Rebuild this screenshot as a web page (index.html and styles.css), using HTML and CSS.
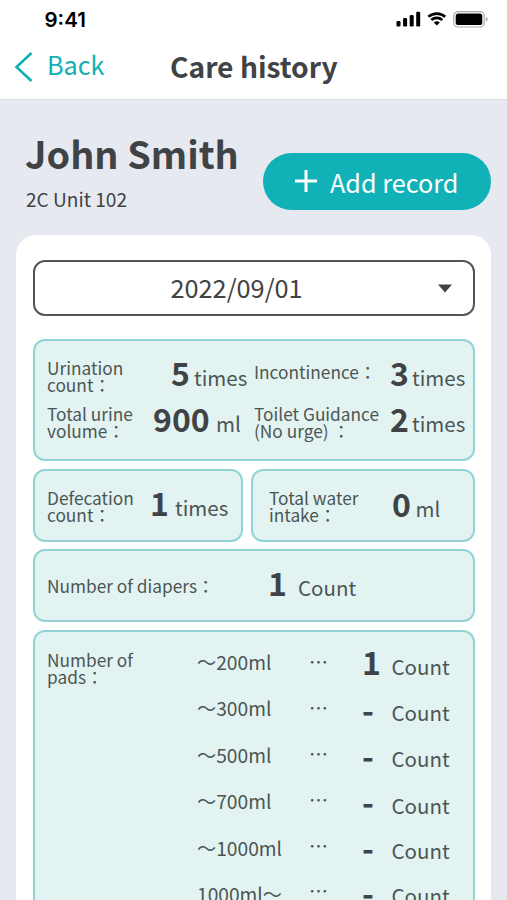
FILE: index.html
```html
<!DOCTYPE html>
<html lang="en">
<head>
<meta charset="utf-8">
<title>Care history</title>
<link rel="stylesheet" href="styles.css">
</head>
<body>
<header class="top">
  <div class="status">
    <span class="clock">9:41</span>
    <svg class="status-icons" width="94" height="20" viewBox="0 0 94 20">
      <rect x="1.5" y="11" width="4" height="5.4" rx="1.2"/>
      <rect x="8.1" y="8" width="4" height="8.4" rx="1.2"/>
      <rect x="14.7" y="5" width="4" height="11.4" rx="1.2"/>
      <rect x="21.2" y="1.8" width="4" height="14.6" rx="1.2"/>
      <path d="M41.8 15.6l-3-3.1a4.5 4.5 0 0 1 6 0z"/>
      <path class="wave" d="M36.3 10a8.3 8.3 0 0 1 11 0M33.4 6.8a12.6 12.6 0 0 1 16.8 0"/>
      <rect class="shell" x="58.8" y="1.6" width="30.4" height="15.4" rx="4.3"/>
      <rect x="60.7" y="3.5" width="26.6" height="11.6" rx="2.6"/>
      <path class="cap" d="M90.8 6.8a2.6 2.6 0 0 1 0 5z"/>
    </svg>
  </div>
  <nav class="bar">
    <svg class="chevron" width="20" height="32" viewBox="0 0 20 32"><path d="M17.5 2L2.5 16l15 14"/></svg>
    <a class="back">Back</a>
    <h1 class="title">Care history</h1>
  </nav>
</header>
<section class="person">
  <div class="who">
    <h2 class="name">John Smith</h2>
    <p class="unit-no">2C Unit 102</p>
  </div>
  <button class="add">
    <svg width="24" height="24" viewBox="0 0 24 24"><path d="M12 1v22M1 12h22"/></svg>
    <span>Add record</span>
  </button>
</section>
<main class="card">
  <div class="date"><span>2022/09/01</span><svg width="16" height="9" viewBox="0 0 16 9"><path d="M1 .5h14L8 8.5z"/></svg></div>
  <div class="box urine">
    <div class="stat s-urination"><span class="label">Urination<br>count：</span><b>5</b><i>times</i></div>
    <div class="stat s-incont"><span class="label">Incontinence：</span><b>3</b><i>times</i></div>
    <div class="stat s-volume"><span class="label">Total urine<br>volume：</span><b>900</b><i>ml</i></div>
    <div class="stat s-toilet"><span class="label">Toilet Guidance<br>(No urge) ：</span><b>2</b><i>times</i></div>
  </div>
  <div class="pair">
    <div class="box"><div class="stat s-defec"><span class="label">Defecation<br>count：</span><b>1</b><i>times</i></div></div>
    <div class="box"><div class="stat s-water"><span class="label">Total water<br>intake：</span><b>0</b><i>ml</i></div></div>
  </div>
  <div class="box diapers"><div class="stat s-diapers"><span class="label">Number of diapers：</span><b>1</b><i>Count</i></div></div>
  <div class="box pads">
    <span class="label">Number of<br>pads：</span>
    <div class="col ranges"><span>～200ml</span><span>～300ml</span><span>～500ml</span><span>～700ml</span><span>～1000ml</span><span>1000ml～</span></div>
    <div class="col dots"><span>…</span><span>…</span><span>…</span><span>…</span><span>…</span><span>…</span></div>
    <div class="col values"><b>1</b><b>-</b><b>-</b><b>-</b><b>-</b><b>-</b></div>
    <div class="col counts"><i>Count</i><i>Count</i><i>Count</i><i>Count</i><i>Count</i><i>Count</i></div>
  </div>
</main>
</body>
</html>
```
FILE: styles.css
```css
* { box-sizing: border-box; }
html, body { margin: 0; height: 900px; overflow: hidden; }
body {
  background: #e6e9f0;
  color: #404345;
  font-family: "Noto Sans CJK JP", "Noto Sans", sans-serif;
  display: flex;
  flex-direction: column;
}
h1, h2, p { margin: 0; }
i { font-style: normal; }
svg { display: block; flex: none; }

.top { flex: none; height: 100px; background: #fff; border-bottom: 1px solid #dcdfe3; }
.status { display: flex; height: 40px; padding: 10px 0 0 44.5px; }
.clock { width: 350.5px; font: 600 20.5px/20px Inter, sans-serif; color: #000; }
.status-icons { fill: #000; }
.wave { fill: none; stroke: #000; stroke-width: 2.6; }
.shell { fill: none; stroke: #aaa; stroke-width: 1.2; }
.cap { fill: #aaa; }
.bar { display: flex; padding-left: 14px; height: 59px; }
.chevron { margin-top: 11px; fill: none; stroke: #10afb4; stroke-width: 2.6; }
.back { width: 123px; margin: 5px 0 0 13px; font-size: 25.2px; line-height: 38px; color: #10afb4; }
.title { margin-top: 7px; font-size: 28.2px; line-height: 38px; font-weight: 700; white-space: nowrap; }

.person { flex: none; display: flex; height: 135px; padding-left: 25px; }
.who { width: 238px; }
.name { margin-top: 26px; font-size: 37.8px; line-height: 54px; font-weight: 700; white-space: nowrap; }
.unit-no { margin: 6px 0 0 1px; font-size: 19.1px; line-height: 26px; }
.add {
  display: flex;
  align-items: center;
  width: 228px;
  height: 57px;
  margin-top: 52.5px;
  padding: 0 0 0 31px;
  border: 0;
  border-radius: 29px;
  background: #10b2b7;
  color: #fff;
  font: 25.2px/38px "Noto Sans CJK JP", sans-serif;
}
.add svg { fill: none; stroke: #fff; stroke-width: 3; }
.add span { margin: 1px 0 0 12px; white-space: nowrap; }

.card {
  flex: none;
  width: 475px;
  height: 665px;
  margin-left: 16px;
  padding: 25px 16px 0 17px;
  background: #fff;
  border-radius: 20px 20px 0 0;
  overflow: hidden;
}
.date {
  display: flex;
  width: 442px;
  height: 56px;
  border: 2px solid #555;
  border-radius: 12px;
  padding-left: 135.5px;
  font-size: 25.3px;
  line-height: 51px;
}
.date span { width: 266.5px; }
.date svg { margin-top: 22px; fill: #404345; }

.box { border: 2px solid #92d4d6; border-radius: 12px; background: #e3f3f2; }
.stat { display: flex; white-space: nowrap; }
.label { flex: none; font-size: 17.3px; line-height: 17px; color: #4b5654; white-space: nowrap; }
b { flex: none; font-size: 32px; line-height: 38px; font-weight: 700; }
i { font-size: 20.5px; line-height: 38px; color: #4b5654; }
.stat b { margin-top: -4px; }
.stat i { margin-top: 1px; }

.urine {
  display: grid;
  grid-template-columns: 207px 1fr;
  grid-template-rows: 46px 46px;
  height: 122px;
  margin-top: 23px;
  padding: 16px 0 0 12px;
}
.s-urination .label { width: 124px; margin-top: 1.5px; }
.s-urination b { width: 23px; }
.s-incont .label { width: 136px; margin-top: 6px; }
.s-incont b { width: 22px; }
.s-volume .label { width: 106px; margin-top: 1.5px; }
.s-volume b { width: 63px; }
.s-toilet .label { width: 136px; margin-top: 1.5px; }
.s-toilet b { width: 22px; }

.pair { display: grid; grid-template-columns: 210px 224px; column-gap: 8px; margin-top: 8px; }
.pair .box { height: 73px; padding: 16px 0 0 12px; }
.pair .box + .box { padding-left: 16px; }
.s-defec .label { width: 103px; margin-top: 1.5px; }
.s-defec b { width: 25px; }
.s-water .label { width: 123px; margin-top: 1.5px; }
.s-water b { margin-top: -3px; width: 23.5px; }
.s-water i { margin-top: 2px; }

.diapers { height: 73px; margin-top: 7px; padding: 16px 0 0 12px; }
.s-diapers .label { width: 221px; margin-top: 10px; }
.s-diapers b { width: 30px; }

.pads { display: flex; height: 320px; margin-top: 8px; padding: 14px 0 0 12px; }
.pads > .label { width: 150px; margin-top: 5px; }
.col { display: flex; flex-direction: column; white-space: nowrap; }
.ranges { width: 112px; margin-top: 6px; font-size: 19.2px; color: #4b5654; }
.ranges span { height: 46.4px; line-height: 20px; }
.dots { width: 53px; margin-top: 6px; font-size: 19px; color: #4b5654; }
.dots span { height: 45.9px; line-height: 20px; }
.values { width: 29.5px; margin-top: -4px; }
.values b { height: 45.9px; }
.values b + b { padding-top: 2px; }
.counts { margin-top: 1px; }
.counts i { height: 45.9px; }
.counts i:nth-child(4) { padding-top: 1px; }
```
